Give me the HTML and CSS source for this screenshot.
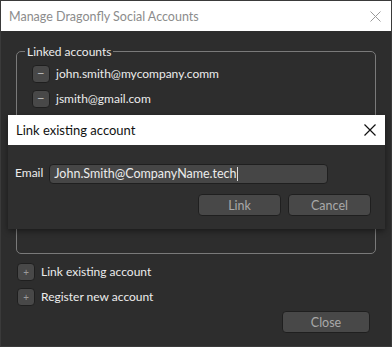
FILE: index.html
```html
<!DOCTYPE html>
<html lang="en">
<head>
  <meta charset="UTF-8" />
  <title>Manage Dragonfly Social Accounts</title>
  <link rel="stylesheet" href="styles.css">
</head>
<body>
  <div class="window">
    <div class="titlebar">
      <span class="title">Manage Dragonfly Social Accounts</span>
      <svg class="close-x faint" width="11" height="11" viewBox="0 0 11 11"><path d="M0.5 0.5L10.5 10.5M10.5 0.5L0.5 10.5" stroke="#9a9a9a" stroke-width="1"/></svg>
    </div>

    <div class="content">
      <fieldset class="group">
        <legend>Linked accounts</legend>
        <div class="account">
          <button class="icon-btn">&minus;</button>
          <span>john.smith@mycompany.comm</span>
        </div>
        <div class="account">
          <button class="icon-btn">&minus;</button>
          <span>jsmith@gmail.com</span>
        </div>
      </fieldset>

      <div class="add-row">
        <button class="icon-btn small">+</button>
        <span>Link existing account</span>
      </div>
      <div class="add-row">
        <button class="icon-btn small">+</button>
        <span>Register new account</span>
      </div>

      <div class="footer">
        <button class="btn wide">Close</button>
      </div>
    </div>

    <!-- modal sits on top of the main window -->
    <div class="dialog">
      <div class="dialog-title">
        <span>Link existing account</span>
        <svg class="close-x" width="12" height="12" viewBox="0 0 12 12"><path d="M0.5 0.5L11.5 11.5M11.5 0.5L0.5 11.5" stroke="#111" stroke-width="1.2"/></svg>
      </div>
      <div class="dialog-body">
        <div class="field">
          <label for="email">Email</label>
          <div class="input" id="email">John.Smith@CompanyName.tech<span class="caret"></span></div>
        </div>
        <div class="dialog-actions">
          <button class="btn">Link</button>
          <button class="btn">Cancel</button>
        </div>
      </div>
    </div>
  </div>
</body>
</html>
```

FILE: styles.css
```css
:root {
  --bg: #2d2d2d;
  --bg-dialog: #2f2f2f;
  --btn-bg: #484848;
  --btn-border: #1f1f1f;
  --text: #ececec;
  --text-dim: #a9a9a9;
  --line: #7a7a7a;
}

* {
  box-sizing: border-box;
}

body {
  margin: 0;
  font-family: Lato, 'Noto Sans', sans-serif;
  font-size: 12px;
  background: #1e1e1e;
}

.window {
  position: relative;
  width: 392px;
  height: 347px;
  border: 1px solid #3a3a3a;
  background: var(--bg);
  display: flex;
  flex-direction: column;
  color: var(--text);
}

.titlebar {
  height: 30px;
  background: #fff;
  display: flex;
  align-items: center;
  justify-content: space-between;
  padding: 0 10px 0 8px;
  flex-shrink: 0;
}
.titlebar .title {
  color: #8c8c8c;
  font-size: 12.5px;
}

.content {
  padding: 13px 15px 0 15px;
  display: flex;
  flex-direction: column;
}

.group {
  margin: 0;
  height: 210px;
  border: 1px solid var(--line);
  border-radius: 5px;
  padding: 2px 0 0 15px;
}
.group legend {
  padding: 0 2px;
  margin-left: -7px;
  color: var(--text);
}

.account {
  display: flex;
  align-items: center;
  gap: 6px;
  height: 25px;
}

.icon-btn {
  width: 18px;
  height: 18px;
  padding: 0;
  border: 1px solid var(--btn-border);
  border-radius: 4px;
  background: var(--btn-bg);
  color: #bdbdbd;
  font-family: 'Noto Sans', sans-serif;
  font-size: 12px;
  line-height: 14px;
}
.icon-btn.small {
  font-size: 10px;
  color: #9a9a9a;
}

.add-row {
  display: flex;
  align-items: center;
  gap: 6px;
  height: 25px;
  padding-left: 1px;
}
.add-row:first-of-type {
  margin-top: 5px;
}

.footer {
  display: flex;
  justify-content: flex-end;
  padding: 2px 6px 0 0;
}

.btn {
  height: 22px;
  border: 1px solid var(--btn-border);
  border-radius: 4px;
  background: var(--btn-bg);
  color: var(--text-dim);
  font-family: Lato, 'Noto Sans', sans-serif;
  font-size: 12.5px;
  width: 83px;
  padding: 0;
}
.btn.wide {
  width: 88px;
}

.dialog {
  position: absolute;
  left: 7px;
  top: 114px;
  width: 377px;
  height: 114px;
  background: var(--bg-dialog);
  box-shadow: 0 2px 6px rgba(0, 0, 0, 0.45);
  display: flex;
  flex-direction: column;
}

.dialog-title {
  height: 30px;
  background: #fff;
  color: #111;
  font-size: 13px;
  display: flex;
  align-items: center;
  justify-content: space-between;
  padding: 0 9px 0 8px;
}

.dialog-body {
  padding: 19px 14px 0 7px;
}

.field {
  display: flex;
  align-items: center;
  gap: 6px;
}
.field label {
  margin-top: -4px;
}

.input {
  width: 279px;
  height: 20px;
  border: 1px solid var(--btn-border);
  border-radius: 4px;
  background: #464646;
  padding: 0 4px;
  line-height: 18px;
  font-size: 12.5px;
  color: var(--text);
}
.caret {
  display: inline-block;
  width: 1px;
  height: 14px;
  background: #ddd;
  vertical-align: -3px;
}

.dialog-actions {
  display: flex;
  justify-content: flex-end;
  gap: 7px;
  margin-top: 10px;
}
```
